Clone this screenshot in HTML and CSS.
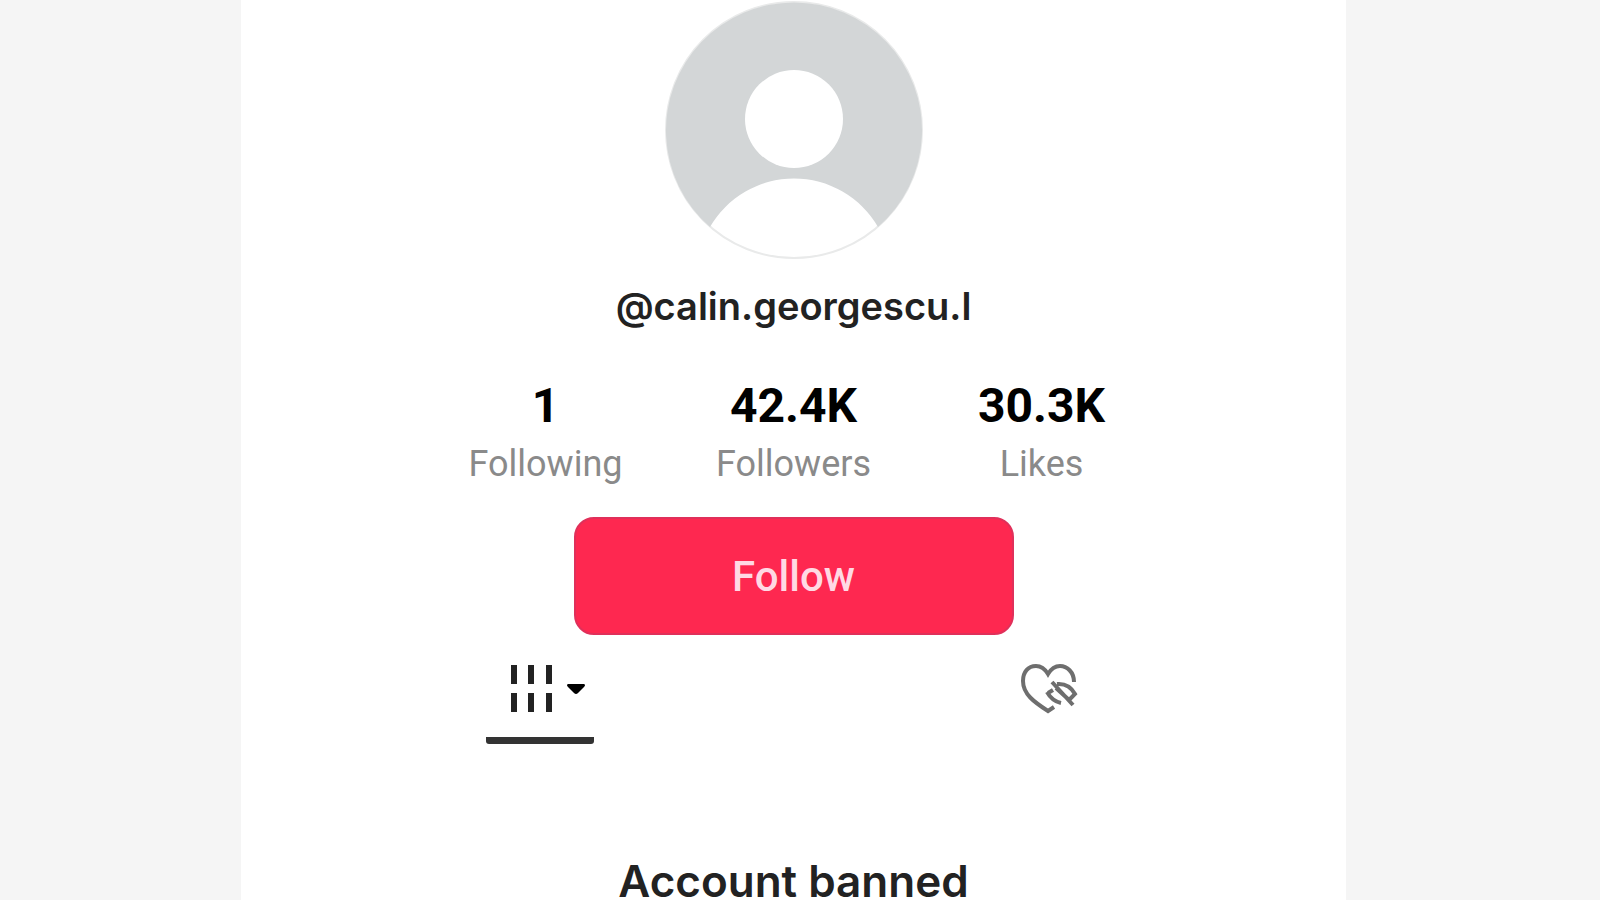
FILE: index.html
```html
<!DOCTYPE html>
<html lang="en">
<head>
    <meta charset="UTF-8">
    <meta name="viewport" content="width=device-width, initial-scale=1.0">
    <title>@calin.georgescu.l</title>
    <link rel="stylesheet" href="styles.css">
</head>
<body>
    <main class="profile">
        <svg class="avatar" viewBox="0 0 258 258" role="img" aria-label="Profile photo">
            <circle cx="129" cy="129" r="128" fill="#fff" stroke="#e9eaea" stroke-width="2"/>
            <path fill="#d3d6d7" d="M45 226A128 128 0 1 1 213 226A97 97 0 0 0 45 226Z"/>
            <circle cx="129" cy="118" r="49" fill="#fff"/>
        </svg>
        <h1 class="handle">@calin.georgescu.l</h1>

        <ul class="stats">
            <li><strong>1</strong><span>Following</span></li>
            <li><strong>42.4K</strong><span>Followers</span></li>
            <li><strong>30.3K</strong><span>Likes</span></li>
        </ul>

        <button class="follow" type="button">Follow</button>

        <div class="tabs">
            <button class="tab active" type="button" aria-label="Videos">
                <svg width="76" height="52" viewBox="0 0 76 52">
                    <g stroke="#222" stroke-width="6">
                        <path d="M4 2v19M21 2v19M39 2v19M4 30v19M21 30v19M39 30v19"/>
                    </g>
                    <path d="M58 21h16q2 1 0 3l-6 6q-2 2-4 0l-6-6q-2-2 0-3z" fill="#000"/>
                </svg>
            </button>
            <button class="tab" type="button" aria-label="Liked videos">
                <svg width="60" height="52" viewBox="0 0 60 52" fill="none" stroke="#6e6e6e" stroke-width="4">
                    <path d="M56 19C56 9 49 3 42 3C36 3 33 6 30 11C27 6 23 3 18 3C10 3 5 9 5 18C5 31 16 39 30 48L36 44"/>
                    <path d="M34 19L55 42M29 29Q34 38 43 40M30 30L35 27M39 21Q51 20 57 31L52 36M38 25L50 36"/>
                </svg>
            </button>
        </div>

        <h2 class="notice">Account banned</h2>
    </main>
</body>
</html>
```

FILE: styles.css
```css
* {
    box-sizing: border-box;
}
body {
    margin: 0;
    min-height: 100vh;
    display: grid;
    grid-template-columns: 241fr 1105fr 254fr;
    background-color: #f5f5f5;
    font-family: Roboto, sans-serif;
    color: #222;
}
.profile {
    grid-column: 2;
    display: flex;
    flex-direction: column;
    align-items: center;
    padding-top: 1px;
    background: #fff;
}
.avatar {
    flex: none;
    width: 258px;
    height: 258px;
}
.handle {
    margin: 24px 0 0;
    font-family: Inter, sans-serif;
    font-size: 38px;
    line-height: 46px;
    font-weight: 600;
}
.stats {
    display: grid;
    grid-template-columns: repeat(3, 1fr);
    width: 744px;
    max-width: 100%;
    margin: 49px 0 0;
    padding: 0;
    list-style: none;
    text-align: center;
}
.stats strong {
    display: block;
    font-size: 48px;
    line-height: 56px;
    color: #000;
}
.stats span {
    display: block;
    margin-top: 8px;
    font-size: 36px;
    line-height: 44px;
    color: #8a8a8a;
}
.follow {
    flex: none;
    width: 440px;
    height: 118px;
    margin-top: 31px;
    border: 2px solid #e0305a;
    border-radius: 20px;
    background: #fe2850;
    color: #ffd9e4;
    font-family: inherit;
    font-size: 42px;
    font-weight: 500;
    cursor: pointer;
}
.tabs {
    display: flex;
    justify-content: space-between;
    width: 616px;
    max-width: 100%;
    margin-top: 28px;
}
.tab {
    display: flex;
    justify-content: center;
    width: 108px;
    height: 81px;
    padding: 0;
    border: none;
    background: none;
    cursor: pointer;
}
.tab.active {
    padding-left: 16px;
    border-bottom: 7px solid #333;
    border-radius: 3px;
}
.notice {
    margin: 118px 0 0;
    font-family: Inter, sans-serif;
    font-size: 44px;
    line-height: 38px;
    font-weight: 600;
}
```
